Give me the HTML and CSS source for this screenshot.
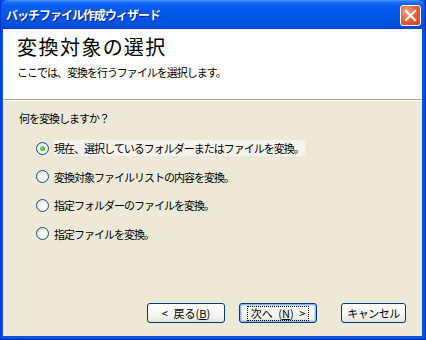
FILE: index.html
```html
<!DOCTYPE html>
<html lang="ja">
<head>
<meta charset="utf-8">
<link rel="stylesheet" href="styles.css">
</head>
<body>
<div class="window">
  <div class="titlebar">
    <span class="title">バッチファイル作成ウィザード</span>
    <div class="close">
      <svg width="13" height="13" viewBox="0 0 13 13"><path d="M2 2 L11 11 M11 2 L2 11" stroke="#fff" stroke-width="2.2" stroke-linecap="square"/></svg>
    </div>
  </div>
  <div class="client">
    <div class="header">
      <div class="heading">変換対象の選択</div>
      <div class="subtitle">ここでは、変換を行うファイルを選択します。</div>
    </div>
    <div class="body">
      <div class="question">何を変換しますか？</div>
      <div class="options">
        <label class="opt"><span class="radio checked"></span><span class="focus">現在、選択しているフォルダーまたはファイルを変換。</span></label>
        <label class="opt"><span class="radio"></span><span>変換対象ファイルリストの内容を変換。</span></label>
        <label class="opt"><span class="radio"></span><span>指定フォルダーのファイルを変換。</span></label>
        <label class="opt"><span class="radio"></span><span>指定ファイルを変換。</span></label>
      </div>
      <div class="buttons">
        <div class="btn back">&lt;&ensp;戻る(<u>B</u>)</div>
        <div class="btn next default"><span class="inner">次へ&ensp;(<u>N</u>)&ensp;&gt;</span></div>
        <div class="btn cancel">キャンセル</div>
      </div>
    </div>
  </div>
</div>
</body>
</html>
```
FILE: styles.css
```css
html, body { margin: 0; padding: 0; }
body { width: 426px; height: 340px; overflow: hidden; background: #fff; }
.window {
  width: 426px; height: 340px; box-sizing: border-box;
  display: flex; flex-direction: column;
  background: #0054e3;
  border-left: 1px solid #0831d9;
  border-right: 1px solid #001ea0;
  border-bottom: 1px solid #001ea0;
  font-family: "Noto Sans CJK JP", "Noto Sans", sans-serif;
}
.titlebar {
  height: 29px; flex: none;
  display: flex; align-items: center; justify-content: space-between;
  padding: 0 4px 0 5px;
  background: linear-gradient(#4a98f8 0px, #1f74f6 2px, #0a5ef0 5px, #0056e6 14px, #0052e0 24px, #0046cc 29px);
  border-radius: 7px 7px 0 0;
}
.title { color: #fff; font-weight: bold; font-size: 12px; letter-spacing: -1px; text-shadow: 1px 1px 0 #0a1e8c; }
.close {
  width: 19px; height: 19px; border: 1px solid #fff; border-radius: 3px;
  background: radial-gradient(circle at 30% 30%, #f4a58a 0%, #e5633c 45%, #c9411a 100%);
  display: flex; align-items: center; justify-content: center;
  margin-top: 1px;
}
.client {
  flex: 1; display: flex; flex-direction: column;
  margin: 0 3px 3px 2px;
  background: #ece9d8;
}
.header {
  height: 71px; flex: none; box-sizing: border-box;
  background: #fff; padding: 6px 14px 0;
  border-bottom: 1px solid #aca899;
  box-shadow: 0 1px 0 #fff;
}
.heading { font-size: 20px; line-height: 24px; letter-spacing: 1.5px; color: #000; font-feature-settings: "palt"; }
.subtitle { font-size: 11px; line-height: 14px; letter-spacing: -1px; margin-top: 6px; color: #000; }
.body { flex: 1; display: flex; flex-direction: column; padding: 10px 14px 13px 16px; font-size: 11px; letter-spacing: -1px; }
.question { line-height: 16px; }
.options { display: flex; flex-direction: column; gap: 12.5px; margin-top: 14px; padding-left: 17px; }
.opt { display: flex; align-items: center; gap: 5px; line-height: 16px; }
.radio {
  width: 11px; height: 11px; border-radius: 50%; border: 1px solid #1c5180;
  background: radial-gradient(circle at 60% 60%, #fff 0%, #f2f1ec 50%, #d6d3c6 100%);
  position: relative; flex: none;
}
.radio.checked::after {
  content: ""; position: absolute; left: 3px; top: 3px; width: 5px; height: 5px; border-radius: 50%;
  background: radial-gradient(circle at 40% 40%, #8be07a, #21a121);
}
.focus { background: #f5f3ea; padding-right: 1px; }
.buttons { margin-top: auto; display: flex; justify-content: flex-end; padding-right: 2px; letter-spacing: 0; }
.btn {
  height: 20px; box-sizing: border-box; border: 1px solid #003c74; border-radius: 3px;
  background: linear-gradient(#ffffff, #f4f3ee 70%, #e3e1d6);
  display: flex; align-items: center; justify-content: center;
  font-size: 11px; color: #000; white-space: pre;
}
.btn u { text-underline-offset: 1px; }
.back { width: 78px; }
.next { width: 78px; margin-left: 14px; box-shadow: inset 0 0 0 1px #8cb4f2, inset 0 0 0 2px #c8daf8; }
.next .inner { outline: 1px dotted #000; padding: 0 3px; line-height: 13px; }
.cancel { width: 65px; margin-left: 24px; letter-spacing: -0.5px; }
```
